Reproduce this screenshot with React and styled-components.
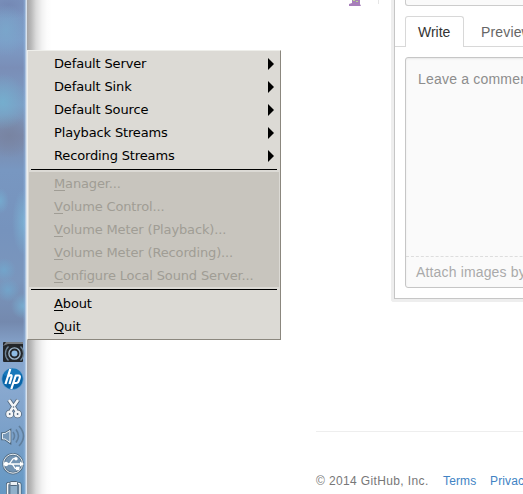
import React from 'react';
import styled, { createGlobalStyle } from 'styled-components';

const Global = createGlobalStyle`
  * { box-sizing: border-box; }
  body { margin: 0; background: #fff; overflow: hidden; }
`;

const Desktop = styled.div`
  position: relative;
  display: flex;
  width: 523px;
  height: 494px;
  overflow: hidden;
  background: #fff;
`;

const Tray = styled.aside`
  flex: 0 0 27px;
  height: 494px;
  padding-top: 342px;
  display: flex;
  flex-direction: column;
  align-items: flex-end;
  background:
    linear-gradient(90deg, transparent 23px, rgba(150, 185, 225, 0.55) 25px, #d3dfec 26px, #dde6f0 27px),
    radial-gradient(ellipse 24px 28px at 3px 102px, #74b0cfe0, #74b0cf00),
    radial-gradient(ellipse 20px 26px at 6px 30px, #79a9ccc0, #79a9cc00),
    radial-gradient(ellipse 13px 34px at 25px 222px, #7bb4d6e0, #7bb4d600),
    radial-gradient(ellipse 9px 13px at 0 201px, #75acd0e0, #75acd000),
    radial-gradient(ellipse 12px 12px at 4px 270px, #70a9cfc0, #70a9cf00),
    radial-gradient(ellipse 12px 12px at 8px 290px, #70a9cfc0, #70a9cf00),
    radial-gradient(ellipse 12px 13px at 23px 306px, #77afd2e0, #77afd200),
    radial-gradient(ellipse 22px 22px at 9px 136px, #7884a2, #7884a200),
    radial-gradient(ellipse 26px 14px at 8px 5px, #7488b4, #7488b400),
    linear-gradient(180deg, #7c94bf 0, #7d9dc8 40px, #7a8eb7 68px, #7c9dc5 105px, #7c89aa 136px,
      #7897c1 170px, #7693bd 230px, #7a96bd 280px, #7489ae 322px, #87a6ce 348px, #88a8cf 390px, #789fc8 440px, #6498c4 494px);
`;

const TrayIcon = styled.svg`
  display: block;
  flex: none;
  width: 26px;
  height: ${(p) => p.$h}px;
  margin-right: 1px;
`;

const Page = styled.main`
  flex: none;
  width: 496px;
  height: 494px;
  overflow: hidden;
  display: flex;
  flex-direction: column;
  font-family: "Liberation Sans", sans-serif;
  background: linear-gradient(90deg, #a5a4a6 0, #b8b8b8 4px, #dadada 9px, #f2f2f2 15px, #fcfcfc 20px, #fff 25px);
`;

const Thread = styled.section`
  display: flex;
  height: 301px;
`;

const Gutter = styled.div`
  flex: 0 0 364px;
  padding-left: 321px;
  display: flex;
`;

const Avatar = styled.svg`
  display: block;
  width: 14px;
  height: 6px;
`;

const Stub = styled.div`
  width: 1px;
  height: 4px;
  margin-left: 16px;
  background: #e6e6e6;
`;

const Frame = styled.div`
  flex: none;
  width: 180px;
  height: 302px;
  border: 3px solid #eee;
  border-top: 0;
  border-radius: 0 0 3px 3px;
`;

const Form = styled.div`
  height: 299px;
  border: solid #c6c6c6;
  border-width: 0 0 1px 1px;
  background: #fff;
`;

const TitleInput = styled.div`
  height: 6px;
  margin-left: 10px;
  border: 1px solid #ccc;
  border-top: 0;
  border-radius: 0 0 3px 3px;
  background: #fafafa;
`;

const Tabs = styled.nav`
  display: flex;
  height: 41px;
  padding: 10px 0 0 10px;
  border-bottom: 1px solid #d8d8d8;
`;

const Tab = styled.span`
  height: 31px;
  width: ${(p) => (p.$active ? 59 : 90)}px;
  padding-left: ${(p) => (p.$active ? 12 : 16)}px;
  border: 1px solid ${(p) => (p.$active ? '#d8d8d8' : 'transparent')};
  border-bottom: 0;
  border-radius: 3px 3px 0 0;
  background: ${(p) => (p.$active ? '#fff' : 'transparent')};
  color: ${(p) => (p.$active ? '#333' : '#666')};
  font-size: 14px;
  line-height: 30px;
  letter-spacing: ${(p) => (p.$active ? 0 : 0.15)}px;
  white-space: nowrap;
`;

const Editor = styled.div`
  margin: 10px 0 0 10px;
  height: 231px;
  border: 1px solid #c6c6c6;
  border-radius: 3px;
  background: #fafafa;
  box-shadow: inset 0 1px 2px rgba(0, 0, 0, 0.075);
  font-size: 14px;
  white-space: nowrap;
  overflow: hidden;
`;

const CommentBody = styled.div`
  height: 198px;
  padding: 12px 0 0 12px;
  line-height: 18px;
  letter-spacing: 0.2px;
  color: #8d8d8d;
`;

const DropHint = styled.div`
  height: 31px;
  padding-left: 10px;
  border-top: 1px dashed #ddd;
  line-height: 30px;
  letter-spacing: 0.15px;
  color: #aaa;
`;

const Footer = styled.footer`
  display: flex;
  margin: 130px 0 0 289px;
  padding-top: 41px;
  border-top: 1px solid #eee;
  font-size: 12px;
  line-height: 16px;
  white-space: nowrap;
  color: #777;
`;

const Copyright = styled.span`
  flex: none;
  width: 127px;
  letter-spacing: 0.37px;
`;

const FooterLink = styled.a`
  flex: none;
  width: 47px;
  color: #4183c4;
  letter-spacing: 0.15px;
`;

const Menu = styled.div`
  position: absolute;
  left: 27px;
  top: 50px;
  width: 254px;
  height: 290px;
  padding: 1px;
  border: 1px solid;
  border-color: #eeeeea #8b877e #8b877e #eeeeea;
  background: #dcdad5;
  font: 13px/23px "DejaVu Sans", sans-serif;
  letter-spacing: -0.14px;
`;

const MenuItem = styled.div`
  display: flex;
  justify-content: space-between;
  align-items: center;
  height: 23px;
  padding: 0 5px 0 25px;
  white-space: nowrap;
  color: ${(p) => (p.$disabled ? '#a09d95' : '#000')};
  background: ${(p) => (p.$disabled ? '#c8c5be' : 'transparent')};
`;

const Mnemonic = styled.span`
  border-bottom: 1px solid currentColor;
  display: inline-block;
  line-height: 12px;
`;

const Arrow = styled.svg`
  display: block;
  width: 6px;
  height: 12px;
`;

const Separator = styled.div`
  height: 1px;
  margin: 2px;
  background: #000;
`;

const submenus = ['Default Server', 'Default Sink', 'Default Source', 'Playback Streams', 'Recording Streams'];
const disabledItems = [
  'Manager...',
  'Volume Control...',
  'Volume Meter (Playback)...',
  'Volume Meter (Recording)...',
  'Configure Local Sound Server...',
];

function Label({ text }) {
  return (
    <span>
      <Mnemonic>{text[0]}</Mnemonic>
      {text.slice(1)}
    </span>
  );
}

function SpeakerIcon() {
  return (
    <TrayIcon $h={22} viewBox="0 0 26 22">
      <rect x="3" y="0" width="20" height="20" rx="1" fill="#23262a" />
      <path d="M3 4L6 0h17v2H8z" fill="#777b80" />
      <g fill="none" stroke="#9db6cb">
        <circle cx="14.5" cy="11.5" r="5.6" strokeWidth="1.4" />
        <path d="M8.500 4.500a9.500 9.500 0 0 0 0 14M20.500 4.500a9.500 9.500 0 0 1 0 14" stroke="#6f8598" strokeWidth="1.300" />
      </g>
      <circle cx="14.500" cy="11.500" r="3" fill="#8fbce4" />
    </TrayIcon>
  );
}

function HpIcon() {
  return (
    <TrayIcon $h={30} viewBox="0 0 26 30">
      <circle cx="12.5" cy="15" r="10.7" fill="#0864a8" stroke="#69a9d6" strokeWidth=".6" />
      <path d="M3.500 11A10 10 0 0 1 21.500 10L12.500 15z" fill="#1778bb" />
      <g fill="none" stroke="#fff" strokeWidth="2.200" strokeLinejoin="round">
        <path d="M10.300 5L5.500 20M7.700 12.500Q12.300 9.500 11.500 13L9.500 20" />
        <path d="M16 11L11.300 25M15.500 11.500h3q2 0 1.200 2.500l-1 3q-.6 2-2.600 2h-2.500" />
      </g>
    </TrayIcon>
  );
}

function ScissorsIcon() {
  return (
    <TrayIcon $h={28} viewBox="0 0 26 28">
      <g fill="none" stroke="#52677d" strokeWidth="4.200">
        <path d="M9 6L16.500 17M18 6L10.500 17" />
        <circle cx="9.700" cy="20" r="2.200" />
        <circle cx="17.600" cy="20" r="2.200" />
      </g>
      <g fill="none" stroke="#f3f5f7" strokeWidth="2.600">
        <path d="M9 6L16.500 17M18 6L10.500 17" />
        <circle cx="9.700" cy="20" r="2.200" />
        <circle cx="17.600" cy="20" r="2.200" />
      </g>
      <circle cx="13.500" cy="13" r=".8" fill="#52677d" />
    </TrayIcon>
  );
}

function VolumeIcon() {
  return (
    <TrayIcon $h={28} viewBox="0 0 26 28">
      <path d="M2.500 11.500h2.500L10 8.500v12l-5-3.500H2.500z" fill="#8dadc9" stroke="#4d6579" strokeWidth="2.600" />
      <path d="M2.500 11.500h2.500L10 8.500v12l-5-3.500H2.500z" fill="#7697b7" stroke="#e6edf3" />
      <g fill="none" stroke="#617f9d" strokeWidth="1.600">
        <path d="M13 10q3 4 0 8" />
        <path d="M16 7.500q5 6.500 0 13" />
        <path d="M19 4q9 10 0 20" />
      </g>
    </TrayIcon>
  );
}

function UsbIcon() {
  return (
    <TrayIcon $h={28} viewBox="0 0 26 28">
      <circle cx="13" cy="13.700" r="9.500" fill="#7394b3" stroke="#526c83" strokeWidth="2.400" />
      <circle cx="13" cy="13.700" r="9.500" fill="none" stroke="#e8eef3" />
      <g fill="none" stroke="#fff" strokeWidth="1.300">
        <path d="M4 14h17M8 14q2 0 3.500-3t3.500-2.500M11 14q2 0 3 2.500t3 2" />
      </g>
      <circle cx="6" cy="14" r="2.200" fill="#fff" />
      <circle cx="16" cy="8.700" r="1.700" fill="#fff" />
      <path d="M20 11.500l4 2.500-4 2.500zM16 16.700h3.500v3.500H16z" fill="#fff" />
    </TrayIcon>
  );
}

function ClipboardIcon() {
  return (
    <TrayIcon $h={16} viewBox="0 0 26 16">
      <rect x="7.500" y="5.500" width="12.500" height="16" rx="1" fill="#587188" stroke="#455d72" strokeWidth="3" />
      <rect x="7.500" y="5.500" width="12.500" height="16" rx="1" fill="#607d96" stroke="#f3f6f8" strokeWidth="1.500" />
      <rect x="10.500" y="8" width="6.500" height="12" fill="#8fb0ca" />
      <rect x="10" y="3.500" width="7.500" height="4" rx="1" fill="#eaf0f4" stroke="#4e667b" />
    </TrayIcon>
  );
}

export default function App() {
  return (
    <>
      <Global />
      <Desktop>
        <Tray>
          <SpeakerIcon />
          <HpIcon />
          <ScissorsIcon />
          <VolumeIcon />
          <UsbIcon />
          <ClipboardIcon />
        </Tray>
        <Page>
          <Thread>
            <Gutter>
              <Avatar viewBox="0 0 14 6">
                <path d="M4 0h8v4l1 2H1V4l3-1z" fill="#a77fba" />
                <path d="M5 0h2v1H5zM8 1h2v1H8z" fill="#b8d68c" />
              </Avatar>
              <Stub />
            </Gutter>
            <Frame>
              <Form>
                <TitleInput />
                <Tabs>
                  <Tab $active>Write</Tab>
                  <Tab>Preview</Tab>
                </Tabs>
                <Editor>
                  <CommentBody>Leave a comment</CommentBody>
                  <DropHint>Attach images by</DropHint>
                </Editor>
              </Form>
            </Frame>
          </Thread>
          <Footer>
            <Copyright>© 2014 GitHub, Inc.</Copyright>
            <FooterLink>Terms</FooterLink>
            <FooterLink>Privacy</FooterLink>
          </Footer>
        </Page>
        <Menu>
          {submenus.map((text) => (
            <MenuItem key={text}>
              <span>{text}</span>
              <Arrow viewBox="0 0 6 12">
                <path d="M0 0l6 6-6 6z" />
              </Arrow>
            </MenuItem>
          ))}
          <Separator />
          {disabledItems.map((text) => (
            <MenuItem key={text} $disabled>
              <Label text={text} />
            </MenuItem>
          ))}
          <Separator />
          <MenuItem><Label text="About" /></MenuItem>
          <MenuItem><Label text="Quit" /></MenuItem>
        </Menu>
      </Desktop>
    </>
  );
}
